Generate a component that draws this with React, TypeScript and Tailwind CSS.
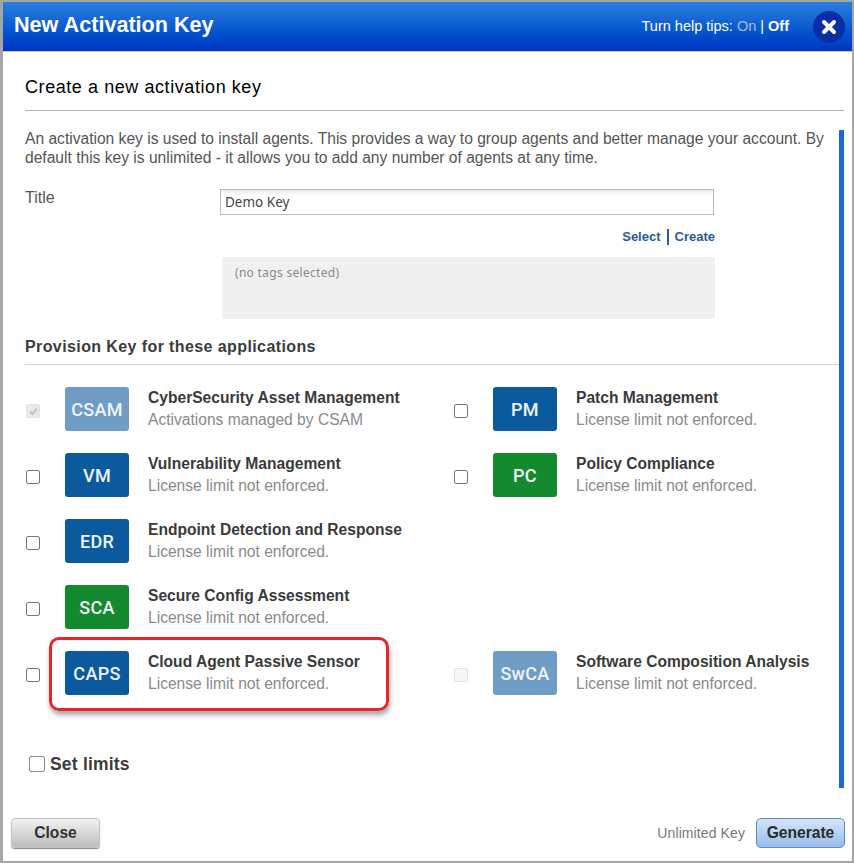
import React from "react";

type P = { code: string; title: string; sub?: string; color: "blue" | "green" | "pale"; cb?: "off" | "checked" | "disabled" };

const colors = { blue: "bg-[#0c5a9e]", green: "bg-[#138a2e]", pale: "bg-[#6f9dc5]" };

function Check({ kind = "off" }: { kind?: "off" | "checked" | "disabled" }) {
  const base = "w-[14px] h-[14px] rounded-[2px] shrink-0 mt-[4px]";
  if (kind === "checked")
    return (
      <span className={`${base} bg-[#e9e9e9] border border-[#e2e2e2] flex items-center justify-center`}>
        <svg width="11" height="11" viewBox="0 0 11 11"><path d="M2 5.5 L4.5 8.2 L9 2.5" fill="none" stroke="#c4c4c4" strokeWidth="2" /></svg>
      </span>
    );
  if (kind === "disabled") return <span className={`${base} bg-[#f6f6f6] border border-[#e2e2e2]`} />;
  return <span className={`${base} bg-white border border-[#767676]`} />;
}

function App_({ p }: { p: P }) {
  return (
    <div className="flex items-center h-11">
      <div className="w-[39px] shrink-0 flex"><Check kind={p.cb} /></div>
      <div className={`w-16 h-11 rounded-[3px] shrink-0 flex items-center justify-center text-[18px] font-medium font-['Roboto',sans-serif] tracking-[0.3px] text-[#eef4f9] ${colors[p.color]}`}>{p.code}</div>
      <div className="ml-[19px] pb-[1px]">
        <div className="text-[15.6px] leading-[22px] font-bold text-[#3a3a3a] whitespace-nowrap">{p.title}</div>
        <div className="text-[15.6px] leading-[22px] text-[#8a8a8a] whitespace-nowrap">{p.sub ?? "License limit not enforced."}</div>
      </div>
    </div>
  );
}

const left: P[] = [
  { code: "CSAM", title: "CyberSecurity Asset Management", sub: "Activations managed by CSAM", color: "pale", cb: "checked" },
  { code: "VM", title: "Vulnerability Management", color: "blue" },
  { code: "EDR", title: "Endpoint Detection and Response", color: "blue" },
  { code: "SCA", title: "Secure Config Assessment", color: "green" },
  { code: "CAPS", title: "Cloud Agent Passive Sensor", color: "blue" },
];
const right: (P | null)[] = [
  { code: "PM", title: "Patch Management", color: "blue" },
  { code: "PC", title: "Policy Compliance", color: "green" },
  null,
  null,
  { code: "SwCA", title: "Software Composition Analysis", color: "pale", cb: "disabled" },
];

export default function App() {
  return (
    <div className="relative w-[854px] h-[863px] bg-white border-t-2 border-l-[3px] border-r-2 border-b-2 border-[#a6a6a6] flex flex-col overflow-hidden font-['Liberation_Sans',Arial,sans-serif]">
      <header className="h-[50px] shrink-0 bg-gradient-to-b from-[#2a7fdd] to-[#0033c4] flex items-center justify-between pl-[11px] pr-[7px] border-b border-[#c8c8c8]">
        <h1 className="text-[21.6px] font-bold text-white pb-[2px]">New Activation Key</h1>
        <div className="flex items-center">
          <span className="text-[14.5px] text-white mr-[24px]">
            Turn help tips: <span className="text-[#a9b9d9]">On</span> | <span className="font-bold">Off</span>
          </span>
          <span className="w-8 h-8 rounded-full bg-[#0a2ea6] flex items-center justify-center">
            <svg width="16" height="16" viewBox="0 0 16 16"><path d="M3 3 L13 13 M13 3 L3 13" stroke="#fff" strokeWidth="4" strokeLinecap="round" /></svg>
          </span>
        </div>
      </header>

      <main className="flex-1 flex flex-col pl-[22px] min-h-0">
        <div className="mr-[8px] h-[59px] border-b border-[#b0b0b0] flex items-end pb-[12px]">
          <h2 className="text-[18px] leading-[22px] text-black tracking-[0.57px]">Create a new activation key</h2>
        </div>

        <div className="flex flex-1 min-h-0 mt-[18px]">
          <div className="flex-1 min-w-0">
            <p className="text-[15.6px] leading-[19px] text-[#555]">
              An activation key is used to install agents. This provides a way to group agents and better manage your account. By default this key is unlimited - it allows you to add any number of agents at any time.
            </p>
            <div className="flex mt-[22px]">
              <label className="w-[195px] shrink-0 text-[16px] leading-[20px] -mt-px text-[#555]">Title</label>
              <div className="w-[495px]">
                <div className="h-[26px] mr-[1px] border border-[#b8b8c8] bg-gradient-to-b from-[#ececec] to-white to-[25%] flex items-center px-1 text-[13.5px] text-[#444] font-['Noto_Sans',sans-serif]">Demo Key</div>
                <div className="flex justify-end items-center h-[22px] mt-[11px] text-[13px] font-bold text-[#2a5a9a]">
                  <span>Select</span>
                  <span className="mx-[6px] w-[2px] h-4 bg-[#2a5a9a]" />
                  <span>Create</span>
                </div>
                <div className="ml-[2px] mt-[9px] h-[62px] bg-[#f0f0f0] px-[13px] py-[8px] text-[12px] leading-[16px] text-[#8a8a8a] font-['Noto_Sans',sans-serif] tracking-[0.3px]">(no tags selected)</div>
              </div>
            </div>
            <h3 className="mt-[17px] h-[29px] border-b border-[#d4d4d4] text-[16px] leading-[22px] font-bold text-[#3c3c3c] tracking-[0.4px]">Provision Key for these applications</h3>

            <div className="mt-[22px] ml-[1px] grid grid-cols-[428px_1fr] gap-y-[22px]">
              {left.map((p, i) => (
                <React.Fragment key={p.code}>
                  <App_ p={p} />
                  {right[i] ? <App_ p={right[i] as P} /> : <div className="h-11" />}
                </React.Fragment>
              ))}
            </div>

            <label className="mt-[59px] ml-[4px] flex items-center h-5">
              <span className="w-4 h-4 rounded-[2px] border border-[#8a8a8a] bg-white mr-[5px] shrink-0" />
              <span className="text-[17.5px] font-bold text-[#3c3c3c] tracking-[0.2px]">Set limits</span>
            </label>
          </div>
          <div className="w-[5px] bg-[#1f66d6] shrink-0 mt-px mr-[8px] h-[658px]" />
        </div>
      </main>

      <footer className="h-[30px] shrink-0 mb-[13px] flex items-center justify-between pl-[8px] pr-[7px]">
        <button className="w-[89px] h-[30px] rounded-[4px] bg-gradient-to-b from-[#f2f2f2] to-[#bdbdbd] border border-[#c4c4c4] shadow-[0_1px_1px_#888] text-[15.6px] font-bold text-[#333]">Close</button>
        <div className="flex items-center">
          <span className="text-[14px] text-[#777] mr-[11px] tracking-[0.1px]">Unlimited Key</span>
          <button className="w-[89px] h-[30px] rounded-[5px] bg-gradient-to-b from-[#d6e6f8] to-[#95bbe8] border border-[#5b8ac4] text-[15.6px] font-bold text-[#2c2c2c]">Generate</button>
        </div>
      </footer>

      <div className="absolute left-[46px] top-[635px] w-[340px] h-[74px] rounded-[10px] border-[3px] border-[#e8262a] shadow-[1px_4px_5px_rgba(0,0,0,0.35)]" />
    </div>
  );
}
